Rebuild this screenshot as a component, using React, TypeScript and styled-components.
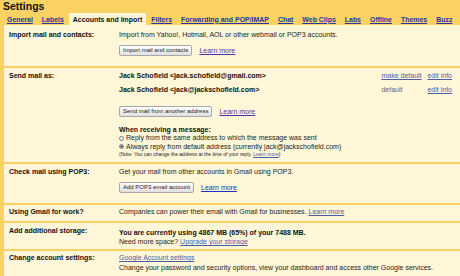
import styled, { createGlobalStyle } from "styled-components";

const GlobalStyle = createGlobalStyle`
  html, body {
    margin: 0;
    padding: 0;
    width: 460px;
    height: 276px;
    overflow: hidden;
    background: #fad163;
  }
  body {
    font-family: "Liberation Sans", Arial, sans-serif;
    color: #222;
  }
`;

const Title = styled.div`
  font-size: 10.5px;
  font-weight: bold;
  line-height: 13px;
  padding-left: 3px;
  color: #111;
`;

const TabBar = styled.div`
  display: flex;
  height: 12px;
  padding-left: 3px;
`;

const Tab = styled.a<{ $active?: boolean }>`
  display: flex;
  align-items: center;
  padding: 0 4px;
  margin-right: 1px;
  font-size: 6.95px;
  font-weight: bold;
  white-space: nowrap;
  color: ${(p) => (p.$active ? "#111" : "#2536a3")};
  text-decoration: ${(p) => (p.$active ? "none" : "underline")};
  background: ${(p) => (p.$active ? "#fff7d7" : "transparent")};
  cursor: pointer;
`;

const Panel = styled.div`
  margin-left: 4px;
  background: #fff7d7;
`;

const Row = styled.div<{ $pt: number; $pb: number }>`
  display: grid;
  grid-template-columns: 115px 1fr;
  padding: ${(p) => p.$pt}px 0 ${(p) => p.$pb}px;
  border-bottom: 2px solid #fad163;
  &:last-child {
    border-bottom: none;
  }
`;

const Label = styled.div`
  padding-left: 5px;
  font-size: 7px;
  font-weight: bold;
  line-height: 10px;
  color: #111;
  white-space: nowrap;
`;

const Content = styled.div<{ $mt?: number }>`
  font-size: 7px;
  line-height: 10px;
  padding-right: 8px;
  margin-top: ${(p) => p.$mt || 0}px;
  white-space: nowrap;
`;

const Line = styled.div<{ $h?: number }>`
  line-height: ${(p) => p.$h || 10}px;
`;

const Strong = styled.span`
  font-weight: bold;
  color: #111;
`;

const Link = styled.a<{ $tone?: "blue" | "visited" | "soft" }>`
  color: ${(p) =>
    p.$tone === "visited" ? "#5a2ea6" : p.$tone === "soft" ? "#4a5ea8" : "#2130c4"};
  text-decoration: underline;
  cursor: pointer;
`;

const ButtonRow = styled.div<{ $mt: number }>`
  display: flex;
  align-items: center;
  gap: 7px;
  margin-top: ${(p) => p.$mt}px;
`;

const Button = styled.button`
  height: 11px;
  padding: 0 3px;
  font-family: inherit;
  font-size: 6px;
  line-height: 9px;
  color: #222;
  border: 1px solid #a8a8a8;
  border-radius: 2px;
  background: linear-gradient(#ffffff, #e0e0e0);
  cursor: pointer;
`;

const SenderRow = styled.div`
  display: grid;
  grid-template-columns: 1fr 46px auto;
  & + & {
    margin-top: 4px;
  }
`;

const Muted = styled.span`
  color: #666;
`;

const Heading = styled.div<{ $mt: number }>`
  margin-top: ${(p) => p.$mt}px;
  font-weight: bold;
  color: #111;
  line-height: 9px;
`;

const RadioLine = styled.label<{ $h: number }>`
  display: flex;
  align-items: center;
  gap: 2px;
  height: ${(p) => p.$h}px;
  line-height: ${(p) => p.$h}px;
`;

const Radio = styled.span<{ $checked?: boolean }>`
  box-sizing: border-box;
  width: 5px;
  height: 5px;
  border-radius: 50%;
  border: 1px solid #7a7a7a;
  background: ${(p) =>
    p.$checked ? "radial-gradient(circle, #333 0 0.9px, #fff 1.2px)" : "#fff"};
`;

const Note = styled.div`
  font-size: 5px;
  line-height: 6px;
`;

const tabs = [
  "General",
  "Labels",
  "Accounts and Import",
  "Filters",
  "Forwarding and POP/IMAP",
  "Chat",
  "Web Clips",
  "Labs",
  "Offline",
  "Themes",
  "Buzz",
];

export default function App() {
  return (
    <>
      <GlobalStyle />
      <Title>Settings</Title>
      <TabBar>
        {tabs.map((t) => (
          <Tab key={t} $active={t === "Accounts and Import"}>
            {t}
          </Tab>
        ))}
      </TabBar>
      <Panel>
        <Row $pt={5} $pb={10}>
          <Label>Import mail and contacts:</Label>
          <Content>
            <Line>Import from Yahoo!, Hotmail, AOL or other webmail or POP3 accounts.</Line>
            <ButtonRow $mt={5}>
              <Button>Import mail and contacts</Button>
              <Link $tone="visited">Learn more</Link>
            </ButtonRow>
          </Content>
        </Row>

        <Row $pt={3} $pb={5}>
          <Label>Send mail as:</Label>
          <Content>
            <SenderRow>
              <Strong>Jack Schofield &lt;jack.schofield@gmail.com&gt;</Strong>
              <Link $tone="soft">make default</Link>
              <Link $tone="soft">edit info</Link>
            </SenderRow>
            <SenderRow>
              <Strong>Jack Schofield &lt;jack@jackschofield.com&gt;</Strong>
              <Muted>default</Muted>
              <Link $tone="soft">edit info</Link>
            </SenderRow>
            <ButtonRow $mt={11}>
              <Button>Send mail from another address</Button>
              <Link $tone="visited">Learn more</Link>
            </ButtonRow>
            <Heading $mt={8}>When receiving a message:</Heading>
            <RadioLine $h={8}>
              <Radio />
              Reply from the same address to which the message was sent
            </RadioLine>
            <RadioLine $h={9}>
              <Radio $checked />
              Always reply from default address (currently jack@jackschofield.com)
            </RadioLine>
            <Note>
              (Note: You can change the address at the time of your reply.{" "}
              <Link $tone="soft">Learn more</Link>)
            </Note>
          </Content>
        </Row>

        <Row $pt={3} $pb={10}>
          <Label>Check mail using POP3:</Label>
          <Content>
            <Line>Get your mail from other accounts in Gmail using POP3.</Line>
            <ButtonRow $mt={5}>
              <Button>Add POP3 email account</Button>
              <Link>Learn more</Link>
            </ButtonRow>
          </Content>
        </Row>

        <Row $pt={2} $pb={4}>
          <Label>Using Gmail for work?</Label>
          <Content>
            <Line>
              Companies can power their email with Gmail for businesses.{" "}
              <Link $tone="soft">Learn more</Link>
            </Line>
          </Content>
        </Row>

        <Row $pt={3} $pb={3}>
          <Label>Add additional storage:</Label>
          <Content $mt={2}>
            <Line $h={9}>
              <Strong>You are currently using 4867 MB (65%) of your 7488 MB.</Strong>
            </Line>
            <Line $h={9}>
              Need more space? <Link $tone="soft">Upgrade your storage</Link>
            </Line>
          </Content>
        </Row>

        <Row $pt={2} $pb={6}>
          <Label>Change account settings:</Label>
          <Content>
            <Line>
              <Link $tone="soft">Google Account settings</Link>
            </Line>
            <Line>
              Change your password and security options, view your dashboard and access other
              Google services.
            </Line>
          </Content>
        </Row>
      </Panel>
    </>
  );
}
